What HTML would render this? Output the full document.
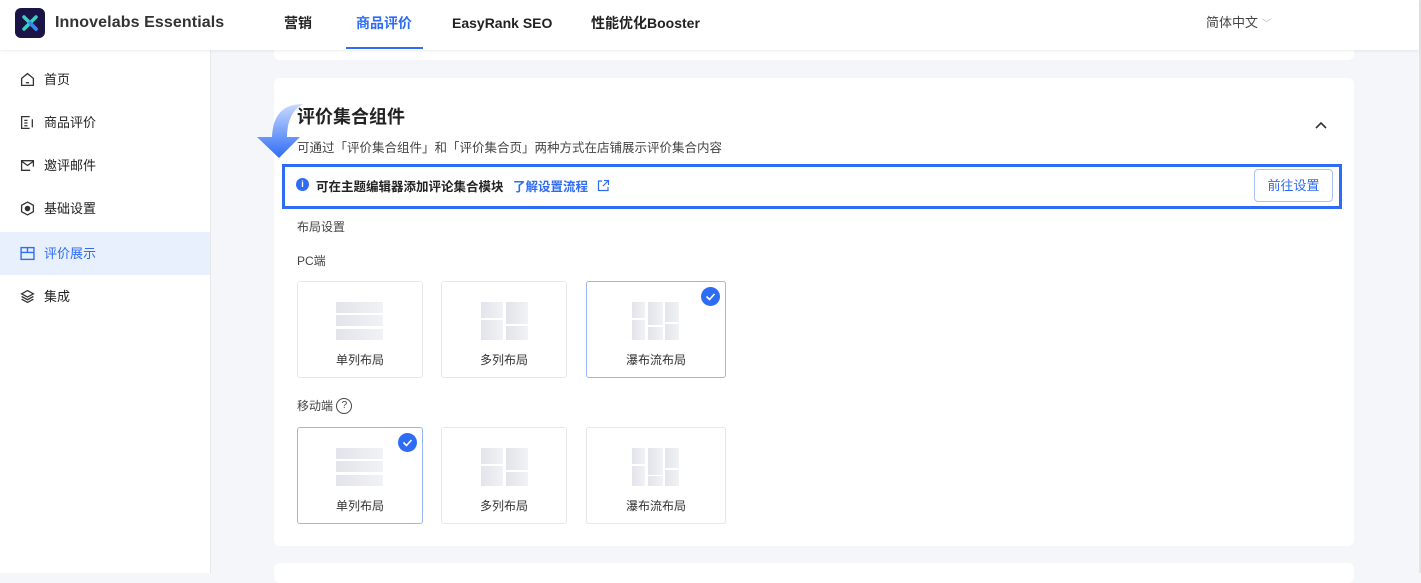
<!DOCTYPE html>
<html><head><meta charset="utf-8"><style>
*{margin:0;padding:0;box-sizing:border-box}
body{width:1421px;height:573px;overflow:hidden;background:#f5f6fa;font-family:"Liberation Sans","Noto Sans CJK SC",sans-serif;color:#333;position:relative}
.hdr{position:absolute;left:0;top:0;width:1419px;height:50px;background:#fff;box-shadow:0 1px 3px rgba(0,0,0,.08);z-index:2}
.logo{position:absolute;left:15px;top:8px;width:30px;height:30px;border-radius:6px;background:#1b1446}
.brand{position:absolute;left:55px;top:13px;font-size:16px;line-height:20px;color:#333;font-weight:bold;letter-spacing:.1px}
.nav{position:absolute;top:13px;font-size:14px;line-height:20px;font-weight:bold;color:#222}
.side{position:absolute;left:0;top:50px;width:211px;height:523px;background:#fff;border-right:1px solid #e8e8e8}
.mi{position:absolute;left:0;width:210px;height:43px;font-size:13px;color:#222;padding-left:44px;line-height:43px}
.mi svg{position:absolute;left:20px;top:14px}
.mi.act{background:#e7f0fc;color:#2f6cf6}
.card{position:absolute;left:274px;width:1080px;background:#fff;border-radius:6px}
.lay{position:absolute;width:126px;height:97px;border:1px solid #e6e7ea;border-radius:3px;background:#fff}
.lay.sel{border-color:#9ab5f5}
.lay .t{position:absolute;left:0;right:0;top:69px;text-align:center;font-size:12px;color:#333}
.g{position:absolute;background:linear-gradient(90deg,#e3e4ea,#f1f2f5)}
.chk{position:absolute;right:5px;top:5px;width:19px;height:19px;border-radius:50%;background:#2f6cf6}
.lbl{position:absolute;left:297px;font-size:12px;color:#444}
</style></head><body>
<div class="hdr">
 <div class="logo"><svg width="30" height="30" viewBox="0 0 30 30"><path d="M9 9l12 12M21 9L9 21" stroke="#3ad0c4" stroke-width="3.5" stroke-linecap="round"/><path d="M15 15l6 6" stroke="#2f8cf6" stroke-width="3.5" stroke-linecap="round"/></svg></div>
 <div class="brand">Innovelabs Essentials</div>
 <div class="nav" style="left:284px">营销</div>
 <div class="nav" style="left:356px;color:#2f6cf6">商品评价</div>
 <div style="position:absolute;left:346px;top:47px;width:77px;height:2px;background:#2f6cf6"></div>
 <div class="nav" style="left:452px">EasyRank SEO</div>
 <div class="nav" style="left:591px">性能优化Booster</div>
 <div style="position:absolute;left:1206px;top:14px;font-size:13px;line-height:18px;color:#444">简体中文 <span style="color:#bbb;font-size:10px">﹀</span></div>
</div>
<div style="position:absolute;left:1419px;top:0;width:2px;height:573px;background:#e3e3e3"></div>
<div class="side">
 <div class="mi" style="top:8px"><svg width="15" height="15" viewBox="0 0 14 14" fill="none" stroke="#333" stroke-width="1.2"><path d="M1.5 6L7 1.5 12.5 6v6.5h-11z"/><path d="M5.5 10h3"/></svg>首页</div>
 <div class="mi" style="top:51px"><svg width="15" height="15" viewBox="0 0 14 14" fill="none" stroke="#333" stroke-width="1.2"><path d="M9 1.5H1.5v11H9M4 5h3M4 7.5h3M4 10h3M11.5 4v7.5"/></svg>商品评价</div>
 <div class="mi" style="top:94px"><svg width="15" height="15" viewBox="0 0 14 14" fill="none" stroke="#333" stroke-width="1.2"><path d="M12.5 8V2.5h-11v9h8M1.5 3l5.5 4 5.5-4"/></svg>邀评邮件</div>
 <div class="mi" style="top:137px"><svg width="15" height="15" viewBox="0 0 14 14" fill="none" stroke="#333" stroke-width="1.2"><path d="M7 1l5.5 3v6L7 13 1.5 10V4z"/><circle cx="7" cy="7" r="2" fill="#333"/></svg>基础设置</div>
 <div class="mi act" style="top:182px"><svg width="15" height="15" viewBox="0 0 14 14" fill="none" stroke="#2f6cf6" stroke-width="1.3"><rect x="1" y="1.5" width="12" height="11"/><path d="M1 6h12M7 1.5V6"/></svg>评价展示</div>
 <div class="mi" style="top:225px"><svg width="15" height="15" viewBox="0 0 14 14" fill="none" stroke="#333" stroke-width="1.2"><path d="M7 1.5l5.5 3L7 7.5 1.5 4.5zM1.5 7l5.5 3 5.5-3M1.5 9.5l5.5 3 5.5-3"/></svg>集成</div>
</div>
<div class="card" style="top:40px;height:20px;border-radius:0 0 6px 6px"></div>
<div class="card" style="top:78px;height:468px"></div>
<div class="card" style="top:563px;height:20px"></div>
<div style="position:absolute;left:297px;top:103px;font-size:18px;font-weight:bold;color:#222">评价集合组件</div>
<svg style="position:absolute;left:1314px;top:121px" width="14" height="10" viewBox="0 0 14 10"><path d="M2 7l5-5 5 5" fill="none" stroke="#333" stroke-width="1.6"/></svg>
<div style="position:absolute;left:297px;top:137px;font-size:12.5px;color:#444">可通过「评价集合组件」和「评价集合页」两种方式在店铺展示评价集合内容</div>
<svg style="position:absolute;left:255px;top:103px" width="50" height="58" viewBox="0 0 50 58"><defs><linearGradient id="a" x1="0" y1="0" x2="0" y2="1"><stop offset="0" stop-color="#c9d9ff"/><stop offset="1" stop-color="#2f6cf6"/></linearGradient></defs><path d="M48 1C30 1 18 10 17 34H2l22 21 21-21H32C32 18 38 6 48 1z" fill="url(#a)"/></svg>
<div style="position:absolute;left:282px;top:164px;width:1060px;height:45px;border:3px solid #2f6cf6;background:#fff"></div>
<div style="position:absolute;left:296px;top:178px;width:13px;height:13px;border-radius:50%;background:#2f6cf6;color:#fff;font-size:9px;font-weight:bold;text-align:center;line-height:13px">i</div>
<div style="position:absolute;left:316px;top:176px;font-size:12.5px;font-weight:bold;color:#222">可在主题编辑器添加评论集合模块</div>
<div style="position:absolute;left:513px;top:176px;font-size:12.5px;font-weight:bold;color:#2f6cf6">了解设置流程</div>
<svg style="position:absolute;left:597px;top:179px" width="13" height="13" viewBox="0 0 13 13" fill="none" stroke="#2f6cf6" stroke-width="1.2"><path d="M5 2H1.5v9.5H11V8M7 1.5h4.5V6M11.5 1.5L6 7"/></svg>
<div style="position:absolute;left:1254px;top:169px;width:79px;height:33px;border:1px solid #a9c2f7;border-radius:4px;color:#2f6cf6;font-size:13px;text-align:center;line-height:31px">前往设置</div>
<div class="lbl" style="top:218px">布局设置</div>
<div class="lbl" style="top:252px">PC端</div>
<div class="lbl" style="top:398px;line-height:16px">移动端 <span style="display:inline-block;width:16px;height:16px;border:1.2px solid #444;border-radius:50%;font-size:10px;text-align:center;line-height:14px;vertical-align:top">?</span></div>

<div class="lay" style="left:297px;top:281px">
 <div class="g" style="left:38px;top:20px;width:47px;height:11px"></div><div class="g" style="left:38px;top:33px;width:47px;height:11px"></div><div class="g" style="left:38px;top:47px;width:47px;height:11px"></div>
 <div class="t">单列布局</div></div>
<div class="lay" style="left:441px;top:281px">
 <div class="g" style="left:39px;top:20px;width:22px;height:16px"></div><div class="g" style="left:39px;top:38px;width:22px;height:20px"></div><div class="g" style="left:64px;top:20px;width:22px;height:22px"></div><div class="g" style="left:64px;top:44px;width:22px;height:14px"></div>
 <div class="t">多列布局</div></div>
<div class="lay sel" style="left:586px;top:281px;width:140px">
 <div class="g" style="left:45px;top:20px;width:13px;height:16px"></div><div class="g" style="left:45px;top:38px;width:13px;height:20px"></div><div class="g" style="left:61px;top:20px;width:15px;height:23px"></div><div class="g" style="left:61px;top:45px;width:15px;height:13px"></div><div class="g" style="left:78px;top:20px;width:14px;height:20px"></div><div class="g" style="left:78px;top:42px;width:14px;height:16px"></div>
 <div class="t">瀑布流布局</div>
 <div class="chk"><svg width="19" height="19" viewBox="0 0 19 19"><path d="M5.5 9.5l3 3 5-5.5" fill="none" stroke="#fff" stroke-width="1.6"/></svg></div></div>
<div class="lay sel" style="left:297px;top:427px">
 <div class="g" style="left:38px;top:20px;width:47px;height:11px"></div><div class="g" style="left:38px;top:33px;width:47px;height:11px"></div><div class="g" style="left:38px;top:47px;width:47px;height:11px"></div>
 <div class="t">单列布局</div>
 <div class="chk"><svg width="19" height="19" viewBox="0 0 19 19"><path d="M5.5 9.5l3 3 5-5.5" fill="none" stroke="#fff" stroke-width="1.6"/></svg></div></div>
<div class="lay" style="left:441px;top:427px">
 <div class="g" style="left:39px;top:20px;width:22px;height:16px"></div><div class="g" style="left:39px;top:38px;width:22px;height:20px"></div><div class="g" style="left:64px;top:20px;width:22px;height:22px"></div><div class="g" style="left:64px;top:44px;width:22px;height:14px"></div>
 <div class="t">多列布局</div></div>
<div class="lay" style="left:586px;top:427px;width:140px">
 <div class="g" style="left:45px;top:20px;width:13px;height:16px"></div><div class="g" style="left:45px;top:38px;width:13px;height:20px"></div><div class="g" style="left:61px;top:20px;width:15px;height:27px"></div><div class="g" style="left:61px;top:48px;width:15px;height:10px"></div><div class="g" style="left:78px;top:20px;width:14px;height:20px"></div><div class="g" style="left:78px;top:42px;width:14px;height:16px"></div>
 <div class="t">瀑布流布局</div></div>
</body></html>
